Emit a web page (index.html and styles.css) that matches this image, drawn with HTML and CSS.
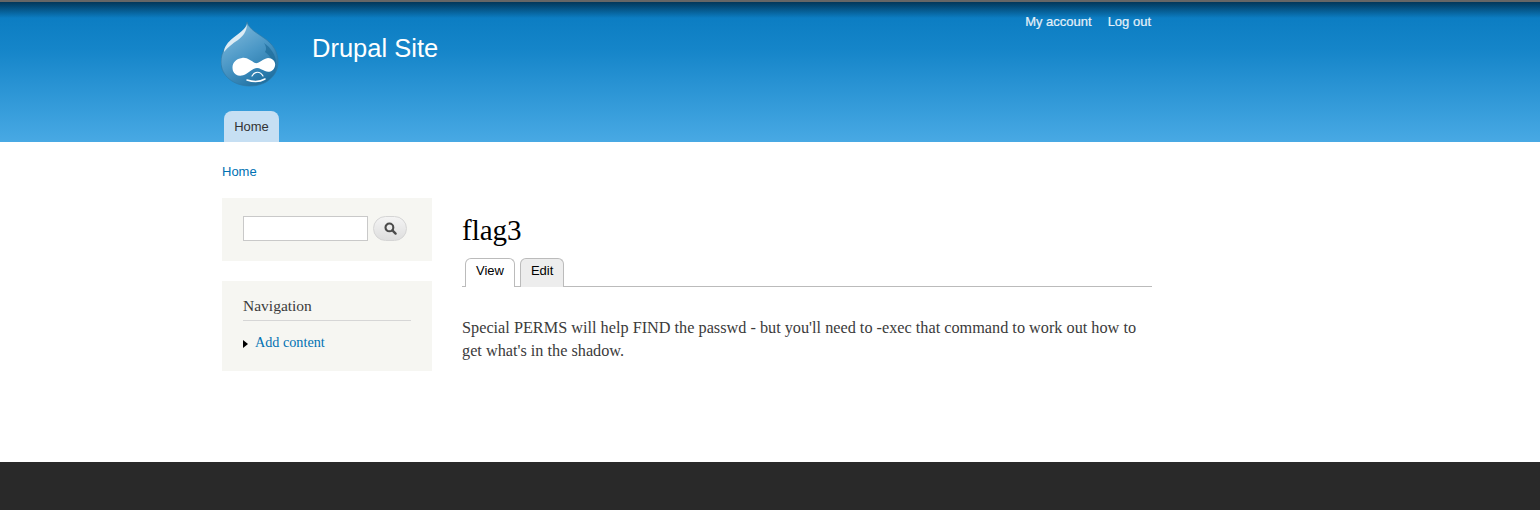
FILE: index.html
```html
<!DOCTYPE html>
<html lang="en">
<head>
<meta charset="utf-8">
<title>flag3 | Drupal Site</title>
<link rel="stylesheet" href="styles.css">
</head>
<body>
<header class="header">
  <div class="wrap header-inner">
    <div class="brand-row">
      <svg class="logo" width="58" height="66" viewBox="0 0 58 66" aria-label="Drupal logo">
        <defs>
          <linearGradient id="drop" x1="0.2" y1="0" x2="0.75" y2="1">
            <stop offset="0" stop-color="#83bbdc"/>
            <stop offset="0.5" stop-color="#4a97c6"/>
            <stop offset="0.8" stop-color="#2f7fb0"/>
            <stop offset="1" stop-color="#1c6c9c"/>
          </linearGradient>
        </defs>
        <path d="M26 1 C28 8 36 12 43 17 C52 23 57 31 57 41 C57 55 45 65 29 65 C13 65 0 55 0 41 C0 31 5 24 12 18 C18 13 25 9 26 1 Z" fill="url(#drop)" stroke="#2f7aa6" stroke-width="0.7"/>
        <path d="M26 3 C25 8 18 12 12 17 C7 21 3 26 3 31 C7 26 11 23 17 19 C21 16 26 11 26 3 Z" fill="#dcecf5"/>
        <path d="M43 22 C50 27 55 34 55 42 C55 46 54 48 53 50 C53 42 50 35 44 31 C46 28 45 25 43 22 Z" fill="#1f6d9c" opacity="0.75"/>
        <path d="M21 37 C26 36 30 40 34 42 C38 43 41 38 47 37 C52 37 55 41 54 45 C53 50 48 52 44 50 C41 49 39 47 36 47 C32 47 29 51 25 53 C20 56 14 55 12 50 C10 43 14 38 21 37 Z" fill="#fff"/>
        <path d="M26 59 C32 61 39 61 44 58" fill="none" stroke="#fff" stroke-width="1.5" stroke-linecap="round"/>
        <path d="M31 55 C34 50 39 50 42 55" fill="none" stroke="#fff" stroke-width="1.2" stroke-linecap="round"/>
      </svg>
      <a class="site-name" href="#">Drupal Site</a>
      <nav class="user-menu">
        <a href="#">My account</a>
        <a href="#">Log out</a>
      </nav>
    </div>
    <nav class="main-menu"><a class="main-tab" href="#">Home</a></nav>
  </div>
</header>

<div class="wrap page">
  <div class="breadcrumb"><a href="#">Home</a></div>
  <div class="columns">
    <aside class="sidebar">
      <section class="block block-search">
        <form class="search">
          <input class="search-input" type="text" aria-label="Search">
          <button class="search-btn" type="button" aria-label="Search">
            <svg width="13" height="13" viewBox="0 0 13 13">
              <circle cx="5.4" cy="5.4" r="3.9" fill="none" stroke="#4a4a4a" stroke-width="2.1"/>
              <path d="M8.4 8.4 L11.6 11.6" stroke="#4a4a4a" stroke-width="2.3" stroke-linecap="round"/>
            </svg>
          </button>
        </form>
      </section>
      <section class="block block-nav">
        <h2 class="block-title">Navigation</h2>
        <ul class="nav-list">
          <li class="nav-item"><span class="arrow"></span><a href="#">Add content</a></li>
        </ul>
      </section>
    </aside>
    <main class="content">
      <h1 class="title">flag3</h1>
      <ul class="tabs">
        <li class="tab tab-active"><a href="#">View</a></li>
        <li class="tab"><a href="#">Edit</a></li>
      </ul>
      <p class="body-text">Special PERMS will help FIND the passwd - but you'll need to -exec that command to work out how to get what's in the shadow.</p>
    </main>
  </div>
</div>

<footer class="footer"></footer>
</body>
</html>
```
FILE: styles.css
```css
* { box-sizing: border-box; }
html, body { margin: 0; padding: 0; }
body {
  height: 510px;
  overflow: hidden;
  background: #fff;
  color: #3b3b3b;
  font-family: "Liberation Serif", serif;
  display: flex;
  flex-direction: column;
}
a { text-decoration: none; }
.wrap { width: 930px; margin-left: 222px; }

.header {
  height: 142px;
  flex: none;
  background: linear-gradient(to bottom, #0779bf 0, #1585c9 35%, #48a9e4 100%);
  position: relative;
  font-family: "Liberation Sans", sans-serif;
}
.header::before {
  content: "";
  position: absolute;
  inset: 0 0 auto 0;
  height: 18px;
  background: linear-gradient(to bottom, #666 0, #666 2px, #02375a 2px, rgba(7,121,191,0) 100%);
}
.header-inner {
  height: 142px;
  display: flex;
  flex-direction: column;
  justify-content: space-between;
  position: relative;
}
.brand-row { display: flex; align-items: flex-start; padding-top: 21px; }
.logo { flex: none; margin-left: -1px; }
.site-name { color: #fff; font-size: 25.5px; line-height: 28px; margin: 13px 0 0 33px; }
.user-menu { margin-left: auto; margin-top: -7px; display: flex; gap: 16px; padding-right: 1px; }
.user-menu a { color: #e6f1f9; font-size: 13px; line-height: 15px; -webkit-text-stroke: 0.2px #e6f1f9; }
.main-menu { padding-left: 2px; display: flex; }
.main-tab {
  display: block;
  width: 55px;
  height: 31px;
  background: #c6dff3;
  color: #333;
  border-radius: 8px 8px 0 0;
  font-size: 13px;
  line-height: 31px;
  text-align: center;
}

.page { flex: 1; }
.breadcrumb { padding-top: 22px; height: 56px; font: 13px/15px "Liberation Sans", sans-serif; }
.breadcrumb a { color: #0071b3; }
.columns { display: flex; gap: 30px; }
.sidebar { width: 210px; flex: none; display: flex; flex-direction: column; gap: 20px; }
.block { background: #f6f6f2; padding: 0 21px; }
.block-search { height: 63px; padding-top: 18px; }
.search { display: flex; align-items: center; gap: 5px; }
.search-input { width: 125px; height: 25px; border: 1px solid #c9c9c9; background: #fff; padding: 0; margin: 0; }
.search-btn {
  width: 34px; height: 25px; padding: 0; margin: 0;
  border: 1px solid #d5d5d5;
  border-radius: 13px;
  background: linear-gradient(to bottom, #f4f4f4, #dedede);
  display: flex; align-items: center; justify-content: center;
}
.block-nav { height: 90px; padding-top: 16px; }
.block-title {
  margin: 0;
  font-size: 15.5px;
  font-weight: normal;
  line-height: 18px;
  height: 24px;
  color: #3b3b3b;
  border-bottom: 1px solid #d6d6d6;
  width: 168px;
}
.nav-list { list-style: none; margin: 13px 0 0; padding: 0; }
.nav-item { display: flex; align-items: center; gap: 7px; font-size: 14.2px; line-height: 17px; }
.nav-item a { color: #0071b3; }
.arrow { width: 0; height: 0; border-left: 5px solid #000; border-top: 4px solid transparent; border-bottom: 4px solid transparent; margin-top: 2px; }

.content { width: 690px; flex: none; }
.title { margin: 16px 0 0; font-size: 29px; font-weight: normal; line-height: 33px; color: #000; }
.tabs {
  list-style: none;
  margin: 11px 0 0;
  padding: 0 0 0 3px;
  display: flex;
  gap: 5px;
  height: 29px;
  border-bottom: 1px solid #bbb;
  font: 13px "Liberation Sans", sans-serif;
}
.tab { height: 29px; background: #ededed; border: 1px solid #bbb; border-bottom: 0; border-radius: 6px 6px 0 0; padding: 0 10px; line-height: 23px; }
.tab a { color: #000; }
.tab-active { background: #fff; position: relative; z-index: 1; }
.body-text { margin: 30px 0 0; font-size: 16.25px; line-height: 23px; color: #3b3b3b; }

.footer { height: 48px; flex: none; background: #292929; }
```
